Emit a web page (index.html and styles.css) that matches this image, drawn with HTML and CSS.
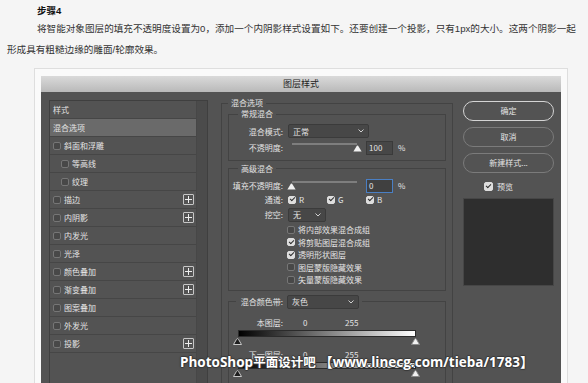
FILE: index.html
```html
<!DOCTYPE html>
<html lang="zh-CN">
<head>
  <meta charset="UTF-8">
  <meta name="viewport" content="width=device-width, initial-scale=1.0">
  <title>步骤4 - 图层样式</title>
  <link rel="stylesheet" href="styles.css">
</head>
<body>
  <div class="article">
    <h4 class="step">步骤4</h4>
    <p class="text">将智能对象图层的填充不透明度设置为0，添加一个内阴影样式设置如下。还要创建一个投影，只有1px的大小。这两个阴影一起<br>形成具有粗糙边缘的雕面/轮廓效果。</p>

    <div class="shot">
      <div class="dialog">
        <div class="titlebar">图层样式</div>
        <div class="dialog-body">

          <!-- left: list of styles -->
          <div class="styles-list">
            <ul class="rows">
              <li class="row">样式</li>
              <li class="row active">混合选项</li>
              <li class="row"><span class="cb"></span>斜面和浮雕</li>
              <li class="row sub"><span class="cb"></span>等高线</li>
              <li class="row sub"><span class="cb"></span>纹理</li>
              <li class="row"><span class="cb"></span>描边<span class="plus"></span></li>
              <li class="row"><span class="cb"></span>内阴影<span class="plus"></span></li>
              <li class="row"><span class="cb"></span>内发光</li>
              <li class="row"><span class="cb"></span>光泽</li>
              <li class="row"><span class="cb"></span>颜色叠加<span class="plus"></span></li>
              <li class="row"><span class="cb"></span>渐变叠加<span class="plus"></span></li>
              <li class="row"><span class="cb"></span>图案叠加</li>
              <li class="row"><span class="cb"></span>外发光</li>
              <li class="row"><span class="cb"></span>投影<span class="plus"></span></li>
            </ul>
            <div class="scroll"></div>
          </div>

          <!-- middle: blending options -->
          <div class="options">
            <fieldset class="group outer">
              <legend>混合选项</legend>

              <fieldset class="group">
                <legend>常规混合</legend>
                <div class="field first">
                  <label>混合模式:</label>
                  <div class="select mode">正常<svg class="chev" width="6" height="4" viewBox="0 0 6 4"><polyline points="0.5,0.5 3,3 5.5,0.5" fill="none" stroke="#d0d0d0" stroke-width="1"/></svg></div>
                </div>
                <div class="field">
                  <label>不透明度:</label>
                  <div class="slider">
                    <div class="track"></div>
                    <svg class="thumb" style="left: 64.5px" width="9" height="7" viewBox="0 0 9 7"><path d="M4.5 0.6C5 0.6 5.3 1 5.6 1.5L8.6 6.6H0.4L3.4 1.5C3.7 1 4 0.6 4.5 0.6Z" fill="#f0f0f0"/></svg>
                  </div>
                  <div class="num">100</div>
                  <span class="unit">%</span>
                </div>
              </fieldset>

              <fieldset class="group advanced">
                <legend>高级混合</legend>
                <div class="field first">
                  <label>填充不透明度:</label>
                  <div class="slider">
                    <div class="track"></div>
                    <svg class="thumb" style="left: -1px" width="9" height="7" viewBox="0 0 9 7"><path d="M4.5 0.6C5 0.6 5.3 1 5.6 1.5L8.6 6.6H0.4L3.4 1.5C3.7 1 4 0.6 4.5 0.6Z" fill="#f0f0f0"/></svg>
                  </div>
                  <div class="num focus">0</div>
                  <span class="unit">%</span>
                </div>
                <div class="field channels">
                  <label>通道:</label>
                  <span class="ch"><span class="cb on"></span>R</span>
                  <span class="ch"><span class="cb on"></span>G</span>
                  <span class="ch"><span class="cb on"></span>B</span>
                </div>
                <div class="field knock">
                  <label>挖空:</label>
                  <div class="select knockout">无<svg class="chev" width="6" height="4" viewBox="0 0 6 4"><polyline points="0.5,0.5 3,3 5.5,0.5" fill="none" stroke="#d0d0d0" stroke-width="1"/></svg></div>
                </div>
                <div class="checks">
                  <div class="check"><span class="cb"></span>将内部效果混合成组</div>
                  <div class="check"><span class="cb on"></span>将剪贴图层混合成组</div>
                  <div class="check"><span class="cb on"></span>透明形状图层</div>
                  <div class="check"><span class="cb"></span>图层蒙版隐藏效果</div>
                  <div class="check"><span class="cb"></span>矢量蒙版隐藏效果</div>
                </div>
              </fieldset>

              <fieldset class="group band">
                <legend>
                  <span class="band-label">混合颜色带:</span>
                  <span class="select blendif">灰色<svg class="chev" width="6" height="4" viewBox="0 0 6 4"><polyline points="0.5,0.5 3,3 5.5,0.5" fill="none" stroke="#d0d0d0" stroke-width="1"/></svg></span>
                </legend>
                <div class="band-row first">
                  <label>本图层:</label>
                  <span class="lo">0</span>
                  <span>255</span>
                </div>
                <div class="ramp"></div>
                <div class="ramp-thumbs">
                  <svg width="9" height="7" viewBox="0 0 9 7"><path d="M4.5 0.6C5 0.6 5.3 1 5.6 1.5L8.5 6.5H0.5L3.4 1.5C3.7 1 4 0.6 4.5 0.6Z" fill="#1e1e1e" stroke="#c8c8c8" stroke-width="1"/></svg>
                  <svg width="9" height="7" viewBox="0 0 9 7"><path d="M4.5 0.6C5 0.6 5.3 1 5.6 1.5L8.5 6.5H0.5L3.4 1.5C3.7 1 4 0.6 4.5 0.6Z" fill="#f2f2f2" stroke="#8a8a8a" stroke-width="1"/></svg>
                </div>
                <div class="band-row next">
                  <label>下一图层:</label>
                  <span class="lo">0</span>
                  <span>255</span>
                </div>
                <div class="ramp"></div>
                <div class="ramp-thumbs">
                  <svg width="9" height="7" viewBox="0 0 9 7"><path d="M4.5 0.6C5 0.6 5.3 1 5.6 1.5L8.5 6.5H0.5L3.4 1.5C3.7 1 4 0.6 4.5 0.6Z" fill="#1e1e1e" stroke="#c8c8c8" stroke-width="1"/></svg>
                  <svg width="9" height="7" viewBox="0 0 9 7"><path d="M4.5 0.6C5 0.6 5.3 1 5.6 1.5L8.5 6.5H0.5L3.4 1.5C3.7 1 4 0.6 4.5 0.6Z" fill="#f2f2f2" stroke="#8a8a8a" stroke-width="1"/></svg>
                </div>
              </fieldset>
            </fieldset>
          </div>

          <!-- right: buttons and preview -->
          <div class="actions">
            <div class="btn default">确定</div>
            <div class="btn">取消</div>
            <div class="btn">新建样式...</div>
            <div class="preview-toggle"><span class="cb on big"></span>预览</div>
            <div class="preview"></div>
          </div>

        </div>
      </div>

      <div class="watermark">PhotoShop<span class="cn">平面设计吧</span> 【www.linecg.com/tieba/1783】</div>
    </div>
  </div>
</body>
</html>
```

FILE: styles.css
```css
body {
  margin: 0;
  background-color: #f5f5f5;
  font-family: "Liberation Sans", "Noto Sans CJK SC", sans-serif;
  overflow: hidden;
}
.article {
  padding-left: 7px;
}
.step {
  margin: 0;
  padding: 5px 0 0 30px;
  font-size: 9.5px;
  line-height: 12px;
  color: #111;
}
.text {
  margin: 1px 0 0;
  font-size: 9.6px;
  line-height: 21px;
  color: #333;
  text-indent: 30px;
  white-space: nowrap;
}

/* screenshot frame */
.shot {
  position: relative;
  box-sizing: border-box;
  width: 534px;
  margin: 8px 0 0 27px;
  padding: 7px 6px 0;
  border: 1px solid #dedede;
  border-bottom: 0;
  background-color: #fafafa;
}
.dialog {
  width: 520px;
  font-family: "Noto Sans CJK SC", sans-serif;
  font-size: 8px;
  color: #e4e4e4;
}
.titlebar {
  height: 16px;
  line-height: 16px;
  text-align: center;
  font-size: 9px;
  color: #1e1e1e;
  background: linear-gradient(#dadada, #b9b9b9);
}
.dialog-body {
  display: flex;
  height: 300px;
  padding: 8px 7px 0 8px;
  background-color: #535353;
  overflow: hidden;
}

/* style list */
.styles-list {
  display: flex;
  flex: none;
  box-sizing: border-box;
  width: 159px;
  border: 1px solid #3f3f3f;
}
.rows {
  list-style: none;
  margin: 0;
  padding: 0;
  width: 146px;
}
.row {
  display: flex;
  align-items: center;
  height: 17px;
  padding-left: 3px;
  border-bottom: 1px solid #464646;
}
.row.active {
  background-color: #6a6a6a;
}
.row.sub {
  padding-left: 11px;
}
.scroll {
  flex: 1;
  background-color: #4b4b4b;
  border-left: 1px solid #474747;
}
.cb {
  position: relative;
  flex: none;
  box-sizing: border-box;
  width: 8px;
  height: 8px;
  margin-right: 3px;
  border: 1px solid #767676;
  border-radius: 2px;
  background-color: #484848;
}
.cb.on {
  border-color: #dedede;
  background-color: #dedede;
}
.cb.on::after {
  content: "";
  position: absolute;
  left: 1.5px;
  top: -0.5px;
  width: 2px;
  height: 4px;
  border: solid #2e2e2e;
  border-width: 0 1.5px 1.5px 0;
  transform: rotate(45deg);
}
.cb.big {
  width: 9px;
  height: 9px;
  margin-right: 4px;
}
.cb.big::after {
  left: 2px;
}
.plus {
  flex: none;
  box-sizing: border-box;
  width: 11px;
  height: 11px;
  margin: 0 2px 0 auto;
  border: 1px solid #c6c6c6;
  border-radius: 1px;
  background:
    linear-gradient(#eeeeee, #eeeeee) center / 7px 1px no-repeat,
    linear-gradient(#eeeeee, #eeeeee) center / 1px 7px no-repeat;
}

/* blending options */
.options {
  flex: none;
  width: 232px;
  margin: -2px 0 0 13px;
}
.group {
  min-width: 0;
  margin: 0;
  padding: 0 0 5px;
  border: 1px solid #434343;
}
.group legend {
  margin-left: 9px;
  padding: 0 3px;
  line-height: 10px;
}
.outer {
  padding: 1px 6px 0;
  border-bottom: 0;
}
.outer > legend {
  margin-left: 0;
}
.advanced {
  margin-top: 3px;
  padding-bottom: 3.5px;
}
.field {
  display: flex;
  align-items: center;
  height: 14px;
  margin-top: 2.5px;
}
.field.first {
  margin-top: 5px;
}
.field label,
.band-row label {
  flex: none;
  width: 54px;
  margin-right: 5px;
  text-align: right;
}
.select {
  display: flex;
  align-items: center;
  justify-content: space-between;
  box-sizing: border-box;
  height: 14px;
  padding: 0 4px;
  border: 1px solid #3b3b3b;
  border-radius: 2px;
  background-color: #474747;
}
.select.mode {
  width: 81px;
}
.select.knockout {
  width: 38px;
}
.select.blendif {
  width: 72px;
}
.slider {
  position: relative;
  flex: none;
  width: 73px;
  height: 14px;
  margin-right: 5px;
}
.track {
  height: 2px;
  margin: 2px 4px 0 4px;
  background-color: #7e7e7e;
}
.thumb {
  position: absolute;
  top: 4px;
}
.num {
  box-sizing: border-box;
  width: 27px;
  height: 14px;
  padding-left: 2px;
  line-height: 12px;
  border: 1px solid #3a3a3a;
  background-color: #474747;
}
.num.focus {
  border-color: #4a7fc4;
  background-color: #404040;
}
.unit {
  margin-left: 5px;
}
.field.channels {
  height: 12px;
  margin-top: 1px;
}
.ch {
  display: flex;
  align-items: center;
  width: 39px;
}
.field.knock {
  margin-top: 2px;
}
.checks {
  margin-top: 2px;
}
.check {
  display: flex;
  align-items: center;
  height: 12.5px;
  padding-left: 58px;
}
.band {
  margin-top: 4px;
  padding-bottom: 30px;
}
.band legend {
  display: flex;
  align-items: center;
  margin-left: 7px;
}
.band-label {
  width: 44px;
  margin-right: 4px;
  text-align: right;
  white-space: nowrap;
}
.band-row {
  display: flex;
  align-items: center;
  height: 11px;
  margin-top: 4px;
}
.band-row.first {
  margin-top: 8px;
}
.lo {
  box-sizing: border-box;
  width: 57px;
  padding-left: 15px;
}
.ramp {
  box-sizing: border-box;
  width: 178px;
  height: 7px;
  margin: 2px 0 0 9px;
  border: 1px solid #2b2b2b;
  background: linear-gradient(to right, #000, #fff);
}
.ramp-thumbs {
  display: flex;
  justify-content: space-between;
  width: 187px;
  height: 7px;
  margin: 1px 0 0 4px;
}

/* buttons */
.actions {
  display: flex;
  flex: none;
  flex-direction: column;
  width: 91px;
  margin: 1px 0 0 10px;
}
.btn {
  box-sizing: border-box;
  height: 20px;
  margin-bottom: 6px;
  line-height: 18px;
  text-align: center;
  border: 1px solid #7b7b7b;
  border-radius: 10px;
}
.btn.default {
  border: 1.5px solid #d4d4d4;
  line-height: 17px;
}
.preview-toggle {
  display: flex;
  align-items: center;
  height: 9px;
  margin-top: 3px;
  padding-left: 21px;
}
.preview {
  height: 86px;
  margin-top: 7px;
  border: 1px solid #464646;
  background-color: #2e2e2e;
}

/* site watermark */
.watermark {
  position: absolute;
  left: 145px;
  top: 284px;
  font-family: "Open Sans", "Noto Sans CJK SC", sans-serif;
  font-size: 13.5px;
  font-weight: bold;
  line-height: 18px;
  color: #fff;
  white-space: nowrap;
  text-shadow: 1px 0 0 #3a3a3a, -1px 0 0 #3a3a3a, 0 1px 0 #3a3a3a, 0 -1px 0 #3a3a3a, 0 0 2px #222;
}
.watermark .cn {
  font-size: 12.5px;
}
```
